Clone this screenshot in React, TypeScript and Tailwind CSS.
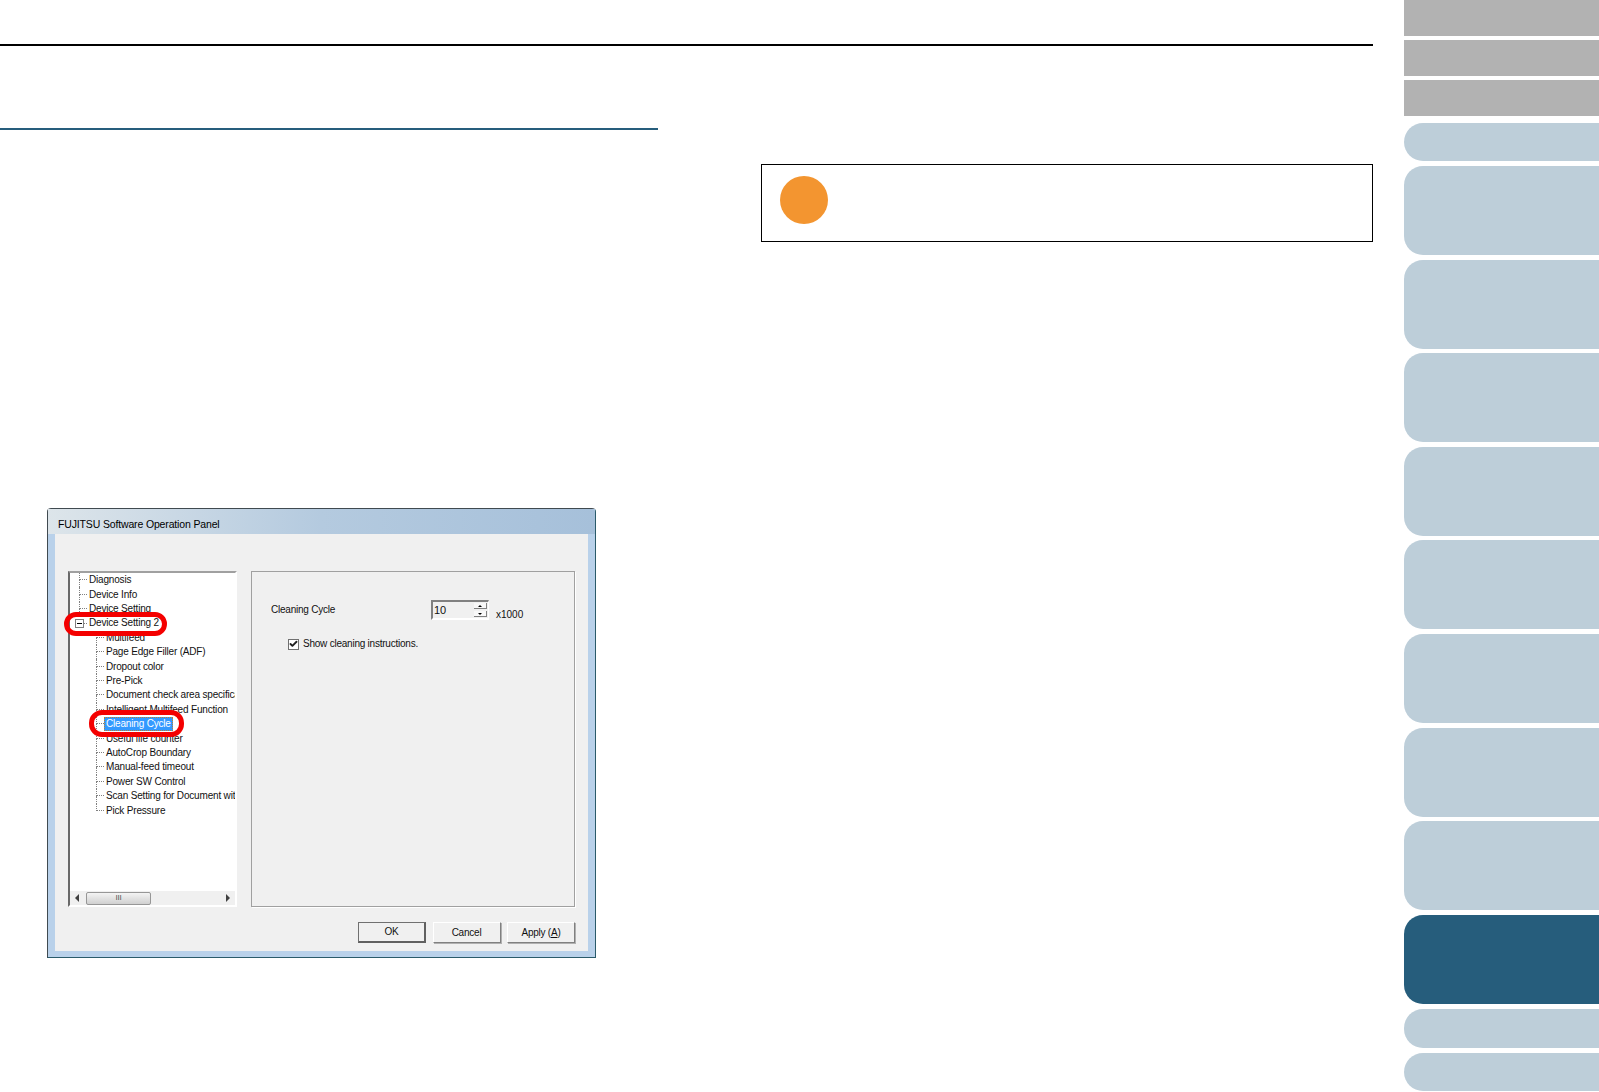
import { Check } from 'lucide-react';

const topItems = ['Diagnosis', 'Device Info', 'Device Setting'];
const subItems = [
    'Multifeed',
    'Page Edge Filler (ADF)',
    'Dropout color',
    'Pre-Pick',
    'Document check area specification',
    'Intelligent Multifeed Function',
    'Cleaning Cycle',
    'Useful life counter',
    'AutoCrop Boundary',
    'Manual-feed timeout',
    'Power SW Control',
    'Scan Setting for Document with',
    'Pick Pressure',
];
const bigTabs = [0, 1, 2, 3, 4, 5, 6, 7];

function Connector({ last }: { last?: boolean }) {
    return (
        <div className="flex h-full w-[8px] shrink-0 flex-col">
            <div className="h-1/2 border-b border-l border-dotted border-[#808080]" />
            <div className={`h-1/2 border-dotted border-[#808080] ${last ? '' : 'border-l'}`} />
        </div>
    );
}

function TreePanel() {
    return (
        <div className="flex h-[336px] w-[169px] shrink-0 flex-col border-t-2 border-r-2 border-b-2 border-l-2 border-t-[#a0a0a0] border-r-white border-b-white border-l-[#696969] bg-white">
            <div className="h-[320px] overflow-hidden whitespace-nowrap tracking-[-0.18px]">
                {topItems.map((item) => (
                    <div key={item} className="ml-[9px] flex h-[14.42px] items-center">
                        <Connector />
                        <span className="ml-[2px]">{item}</span>
                    </div>
                ))}
                <div className="ml-[5px] flex h-[14.42px] items-center">
                    <div className="flex h-[9px] w-[9px] shrink-0 items-center justify-center border border-[#808080] bg-white">
                        <div className="h-px w-[5px] bg-black" />
                    </div>
                    <div className="h-px w-[3px] border-t border-dotted border-[#808080]" />
                    <span className="ml-[2px]">Device Setting 2</span>
                </div>
                {subItems.map((item, i) => (
                    <div key={item} className="ml-[26px] flex h-[14.42px] items-center">
                        <Connector last={i === subItems.length - 1} />
                        {item === 'Cleaning Cycle' ? (
                            <span className="ml-0 border border-dotted border-[#c08030] bg-[#3399ff] px-px leading-[12px] text-white">{item}</span>
                        ) : (
                            <span className="ml-[2px]">{item}</span>
                        )}
                    </div>
                ))}
            </div>
            <div className="flex h-[14px] items-center bg-[#f0f0f0]">
                <div className="ml-[5px] h-0 w-0 border-y-[4px] border-r-[4px] border-y-transparent border-r-[#404040]" />
                <div className="ml-[7px] flex h-[13px] w-[65px] items-center justify-center rounded-[2px] border border-[#979797] bg-gradient-to-b from-[#f4f4f4] to-[#d0d0d0] text-[8px] leading-none text-[#555555]">
                    III
                </div>
                <div className="ml-auto mr-[5px] h-0 w-0 border-y-[4px] border-l-[4px] border-y-transparent border-l-[#404040]" />
            </div>
        </div>
    );
}

function SpinBox() {
    return (
        <div className="flex h-[20px] w-[58px] items-center justify-between border-t-2 border-r border-b-2 border-l-2 border-t-[#808080] border-r-white border-b-white border-l-[#808080] bg-[#f0f0f0] pr-[1px]">
            <span className="ml-px text-[11px]">10</span>
            <div className="flex flex-col gap-[2px]">
                <div className="flex h-[6px] w-[13px] items-center justify-center border-r border-b border-[#808080] bg-[#f8f8f8]">
                    <div className="h-0 w-0 border-x-[2px] border-b-[2px] border-x-transparent border-b-black" />
                </div>
                <div className="flex h-[6px] w-[13px] items-center justify-center border-r border-b border-[#808080] bg-[#f8f8f8]">
                    <div className="h-0 w-0 border-x-[2px] border-t-[2px] border-x-transparent border-t-black" />
                </div>
            </div>
        </div>
    );
}

function SettingsPanel() {
    return (
        <div className="h-[336px] w-[324px] shrink-0 border border-[#a0a0a0] pt-[28px] pl-[19px] shadow-[1px_1px_0_#ffffff]">
            <div className="flex items-start">
                <span className="mt-[3px] w-[160px]">Cleaning Cycle</span>
                <SpinBox />
                <span className="mt-[8px] ml-[7px] tracking-[0px]">x1000</span>
            </div>
            <div className="mt-[15px] ml-[17px] flex items-center gap-[4px]">
                <div className="flex h-[11px] w-[11px] items-center justify-center border border-[#707070] bg-white">
                    <Check size={10} strokeWidth={5} className="text-[#202020]" />
                </div>
                <span>Show cleaning instructions.</span>
            </div>
        </div>
    );
}

function DialogButton({ primary, children }: { primary?: boolean; children: React.ReactNode }) {
    return (
        <div
            className={`flex h-[21px] w-[68px] items-center justify-center border-t border-l bg-[#f0f0f0] ${
                primary
                    ? 'border-[#707070] border-r-2 border-b-2 border-r-[#606060] border-b-[#606060]'
                    : 'border-white border-r border-b border-r-[#808080] border-b-[#808080] shadow-[1px_1px_0_#b0b0b0]'
            }`}
        >
            {children}
        </div>
    );
}

function OperationPanel() {
    return (
        <div className="relative ml-[47px] mt-[378px] flex h-[450px] w-[549px] flex-col rounded-t-[4px] border border-[#404a50] border-b-[#2a5a6a] border-r-[#2a5a6a] bg-[#b9d1ea] px-[7px] pb-[6px] font-['Liberation_Sans',sans-serif] text-[10px] leading-[14px] tracking-[-0.23px] text-[#111111]">
            <div className="-mx-[7px] flex h-[25px] items-center bg-gradient-to-r from-[#dde5ea] via-[#b4cadf] to-[#a6c0da] pt-[4px] pl-[10px] text-[10.5px] tracking-[-0.15px] text-black">
                FUJITSU Software Operation Panel
            </div>
            <div className="flex-1 bg-[#f0f0f0] pt-[37px] pl-[13px]">
                <div className="flex gap-[14px]">
                    <TreePanel />
                    <SettingsPanel />
                </div>
                <div className="mt-[15px] mr-[13px] flex justify-end gap-[6.5px]">
                    <DialogButton primary>OK</DialogButton>
                    <DialogButton>Cancel</DialogButton>
                    <DialogButton>
                        <span>
                            Apply (<u>A</u>)
                        </span>
                    </DialogButton>
                </div>
            </div>
            {/* red call-outs drawn over the screenshot */}
            <div className="absolute left-[16px] top-[103px] h-[24px] w-[103px] rounded-[12px] border-[5px] border-[#f40000]" />
            <div className="absolute left-[41px] top-[201px] h-[27px] w-[95px] rounded-[13px] border-[5px] border-[#f40000]" />
        </div>
    );
}

export default function App() {
    return (
        <div className="flex h-[1092px] w-[1599px] overflow-hidden bg-white">
            <div className="w-[1373px] shrink-0 pt-[44px]">
                <div className="h-[2px] bg-black" />
                <div className="flex">
                    <div className="w-[658px] shrink-0 pt-[82px]">
                        <div className="h-[2px] bg-[#265d7c]" />
                        <OperationPanel />
                    </div>
                    <div className="ml-[103px] mt-[118px] h-[78px] w-[612px] border border-black pt-[11px] pl-[18px]">
                        <div className="h-[48px] w-[48px] rounded-full bg-[#f39530]" />
                    </div>
                </div>
            </div>
            <div className="ml-[31px] flex w-[195px] shrink-0 flex-col">
                <div className="h-[36px] bg-[#b2b2b2]" />
                <div className="mt-[4px] h-[36px] bg-[#b2b2b2]" />
                <div className="mt-[4px] h-[36px] bg-[#b2b2b2]" />
                <div className="mt-[7px] h-[38px] rounded-l-[19px] bg-[#bdced9]" />
                <div className="mt-[5px] flex flex-col gap-[4.6px]">
                    {bigTabs.map((tab) => (
                        <div key={tab} className="h-[89px] rounded-l-[19px] bg-[#bdced9]" />
                    ))}
                    <div className="h-[89px] rounded-l-[19px] bg-[#265d7c]" />
                </div>
                <div className="mt-[5px] h-[39px] rounded-l-[19px] bg-[#bdced9]" />
                <div className="mt-[5px] h-[38px] rounded-l-[19px] bg-[#bdced9]" />
            </div>
        </div>
    );
}
